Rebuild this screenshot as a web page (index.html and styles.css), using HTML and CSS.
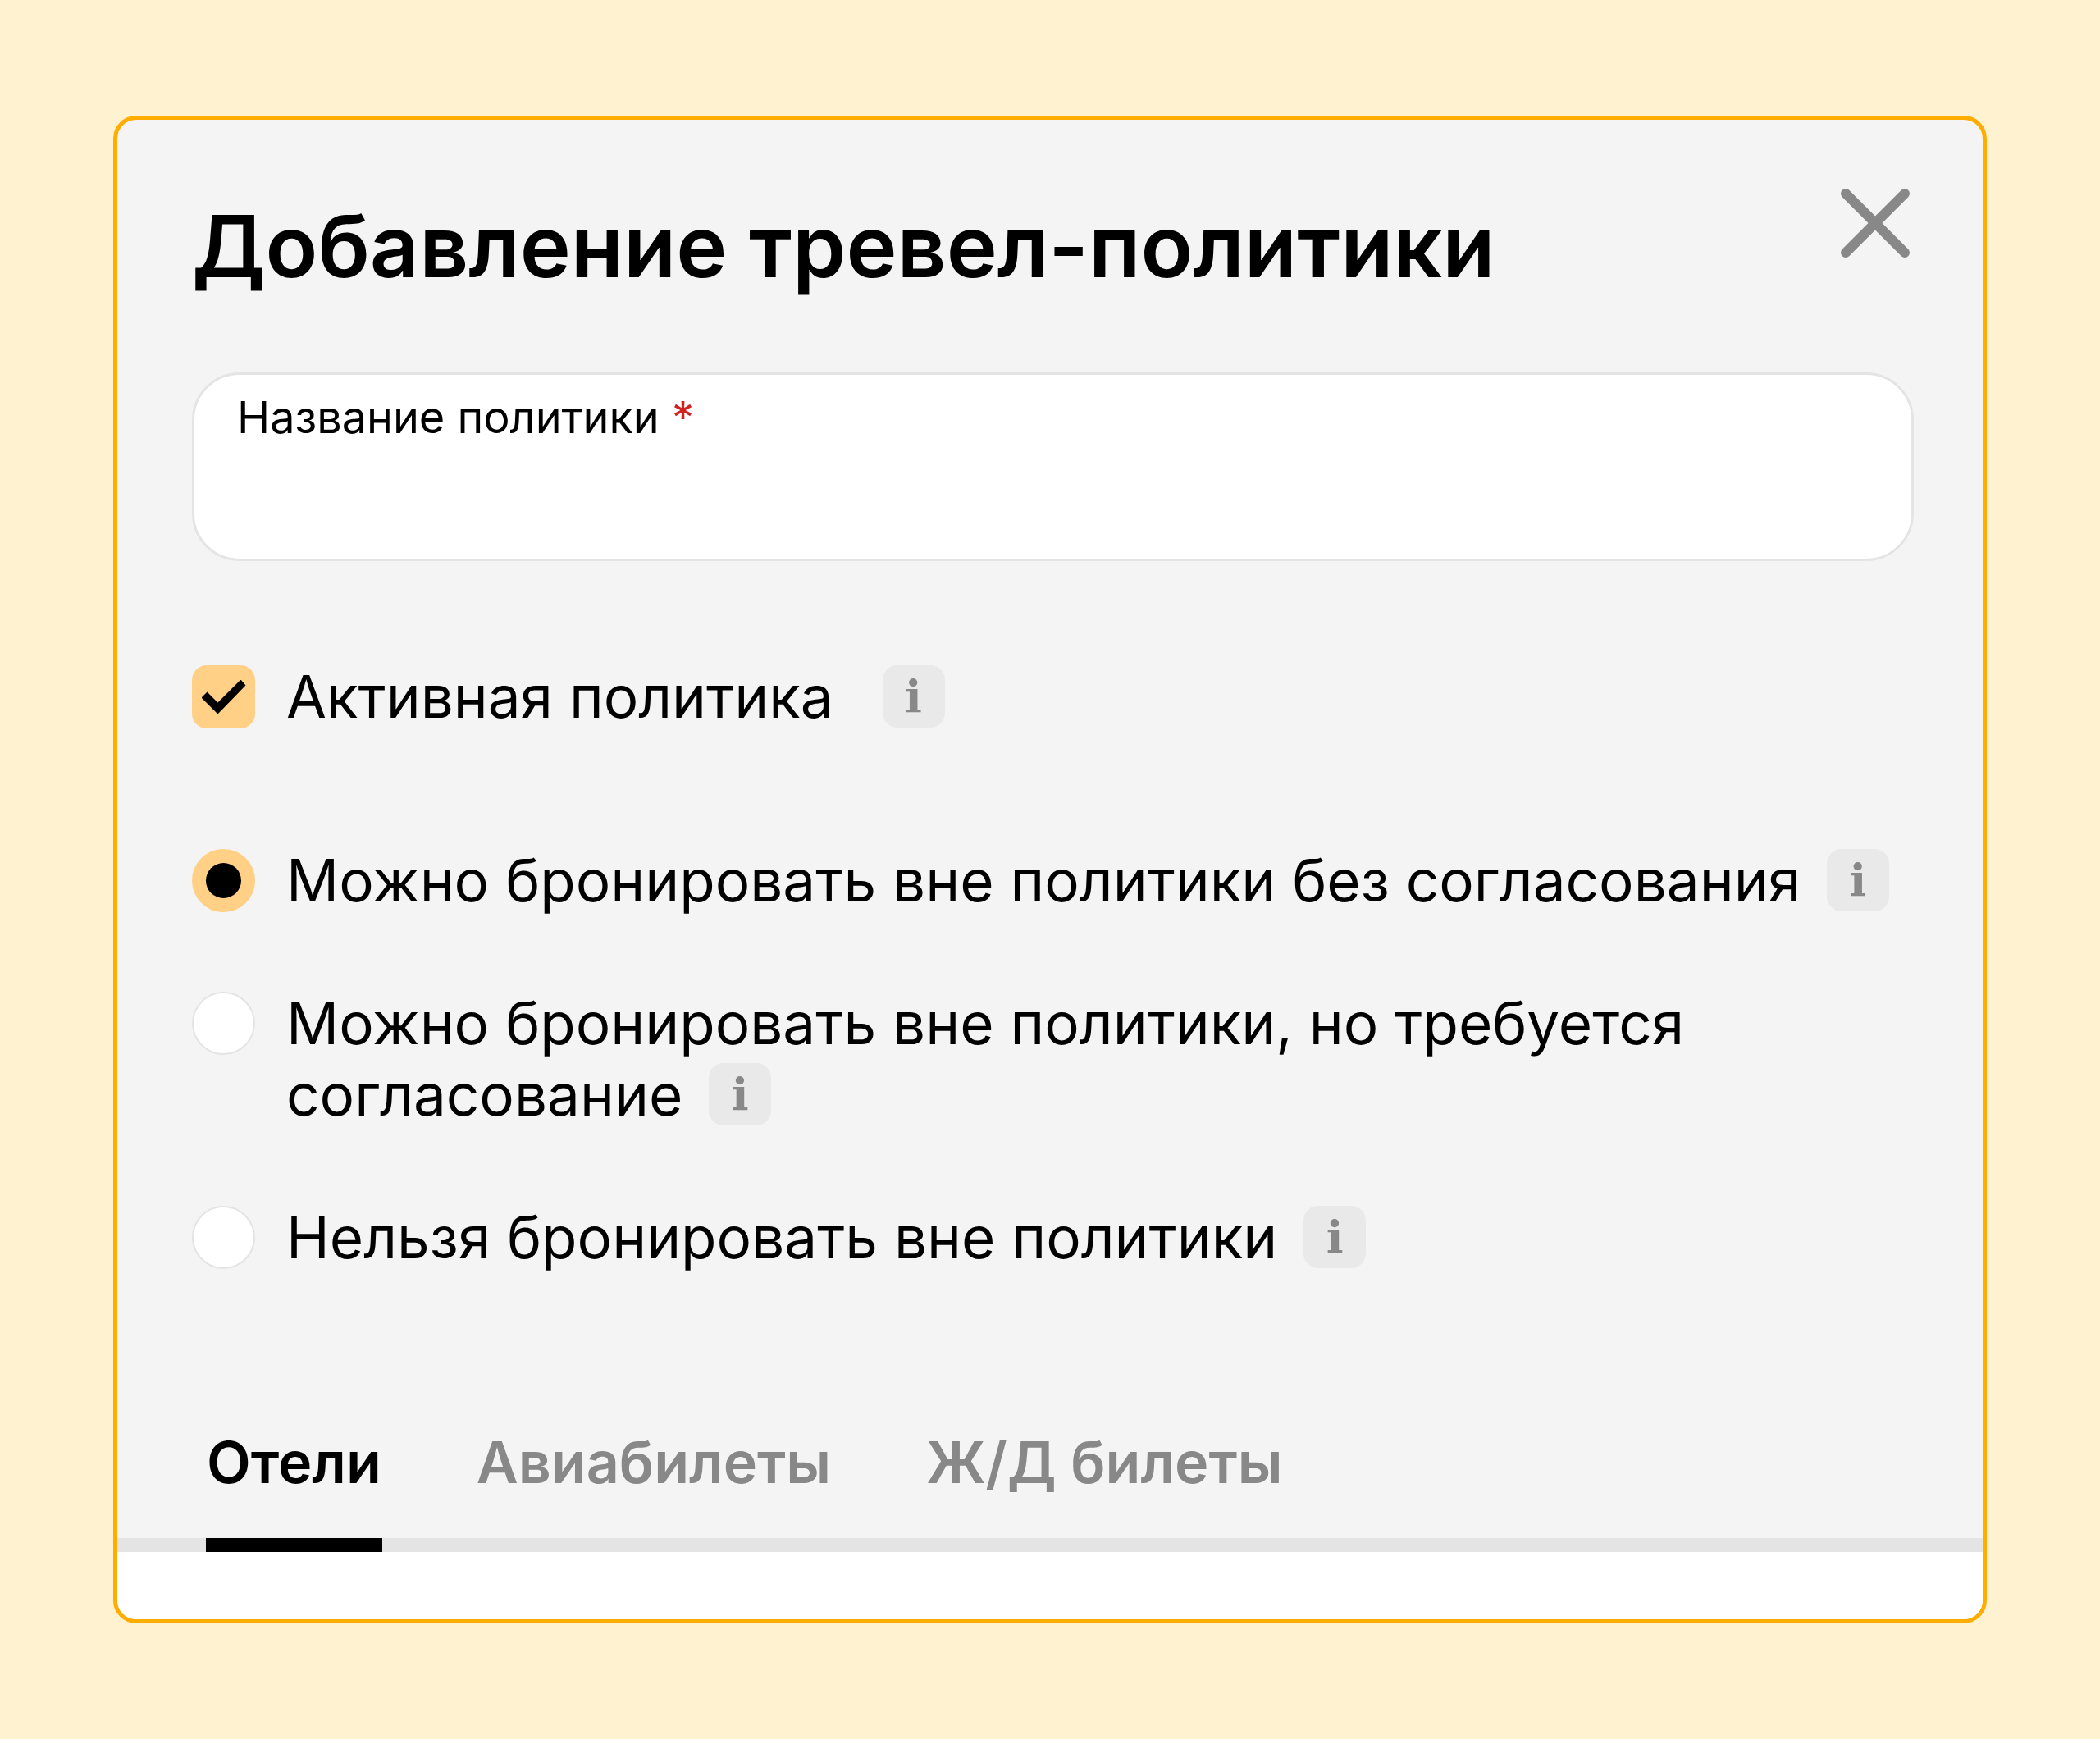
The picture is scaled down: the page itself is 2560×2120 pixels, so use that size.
FILE: index.html
```html
<!DOCTYPE html>
<html lang="ru">
<head>
  <meta charset="UTF-8">
  <meta name="viewport" content="width=device-width, initial-scale=1.0">
  <title>Добавление тревел-политики</title>
  <link rel="stylesheet" href="styles.css">
</head>
<body>
  <main class="modal">
    <form class="modal-body">
      <header class="modal-header">
        <h1>Добавление тревел-политики</h1>
        <button type="button" class="btn-close" aria-label="Закрыть">
          <svg viewBox="0 0 84 84" fill="none" stroke="currentColor" stroke-width="12" stroke-linecap="round">
            <path d="M6 6L78 78M78 6L6 78"/>
          </svg>
        </button>
      </header>

      <div class="field">
        <label for="policy-name">Название политики <span class="required">*</span></label>
        <input type="text" id="policy-name" required>
      </div>

      <div class="option option-active">
        <input type="checkbox" id="policy-active" class="check" checked>
        <div class="option-text">
          <label for="policy-active">Активная политика</label>
          <button type="button" class="info" aria-label="Подсказка">i</button>
        </div>
      </div>

      <div class="option-list">
        <div class="option">
          <input type="radio" name="approval" id="approval-free" class="radio" checked>
          <div class="option-text">
            <label for="approval-free">Можно бронировать вне политики без согласования</label>
            <button type="button" class="info" aria-label="Подсказка">i</button>
          </div>
        </div>
        <div class="option">
          <input type="radio" name="approval" id="approval-required" class="radio">
          <div class="option-text">
            <label for="approval-required">Можно бронировать вне политики, но требуется согласование</label>
            <button type="button" class="info" aria-label="Подсказка">i</button>
          </div>
        </div>
        <div class="option">
          <input type="radio" name="approval" id="approval-denied" class="radio">
          <div class="option-text">
            <label for="approval-denied">Нельзя бронировать вне политики</label>
            <button type="button" class="info" aria-label="Подсказка">i</button>
          </div>
        </div>
      </div>
    </form>

    <nav class="tabs">
      <button type="button" class="tab active">Отели</button>
      <button type="button" class="tab">Авиабилеты</button>
      <button type="button" class="tab">Ж/Д билеты</button>
    </nav>
    <div class="tab-panel"></div>
  </main>
</body>
</html>
```
FILE: styles.css
```css
:root {
  --color-page: #fff2d1;
  --color-border: #ffad00;
  --color-bg: #f4f4f4;
  --color-line: #e4e4e4;
  --color-accent: #ffd086;
  --color-info: #e9e9e9;
  --color-muted: #888888;
  --color-required: #d02020;
  --font-family: Inter, Roboto, sans-serif;
}
* { box-sizing: border-box; margin: 0; padding: 0; }
body {
  padding: 141px 138px;
  background: var(--color-page);
  font-family: var(--font-family);
  font-size: 71px;
  line-height: 87px;
  color: #000;
}
button, input { font: inherit; color: inherit; border: none; background: none; }
button { cursor: pointer; }

/* Modal */
.modal {
  border: 5px solid var(--color-border);
  border-radius: 28px;
  background: var(--color-bg);
  overflow: hidden;
}
.modal-body { padding: 84px 84px 0 91px; }
.modal-header {
  display: flex;
  align-items: flex-start;
  justify-content: space-between;
  margin-bottom: 88px;
}
.modal-header h1 {
  padding-top: 4px;
  font-size: 105px;
  font-weight: 600;
  line-height: 132px;
}
.btn-close { margin-right: 5px; color: var(--color-muted); }
.btn-close svg { display: block; width: 84px; height: 84px; }

/* Name field */
.field {
  display: flex;
  flex-direction: column;
  margin-bottom: 122px;
  padding: 16px 52px;
  border: 3px solid var(--color-line);
  border-radius: 58px;
  background: #fff;
}
.field label { font-size: 54px; line-height: 72px; }
.field input { height: 120px; outline: none; }
.required { color: var(--color-required); }

/* Options */
.option { display: flex; align-items: flex-start; gap: 38px; }
.option-active { margin-bottom: 137px; }
.option-active .info { margin-left: 40px; }
.option-list { display: flex; flex-direction: column; gap: 87px; }
.option-text { flex: 1; }
.check, .radio {
  appearance: none;
  display: grid;
  place-items: center;
  flex: none;
  width: 77px;
  height: 77px;
  margin-top: 5px;
  border: 2px solid var(--color-line);
  background: #fff;
}
.check { border-radius: 18px; }
.radio { border-radius: 50%; }
.check:checked, .radio:checked { border-color: var(--color-accent); background: var(--color-accent); }
.check:checked::before {
  content: "";
  width: 54px;
  height: 42px;
  background: #000;
  clip-path: polygon(0 22px, 7px 15px, 20px 28px, 48px 0, 54px 7px, 20px 42px);
}
.radio:checked::before {
  content: "";
  width: 43px;
  height: 43px;
  border-radius: 50%;
  background: #000;
}
.info {
  width: 76px;
  height: 76px;
  margin-top: 5px;
  margin-left: 12px;
  border-radius: 18px;
  background: var(--color-info);
  font-family: "DejaVu Serif", serif;
  font-size: 55px;
  font-weight: bold;
  line-height: 76px;
  color: var(--color-muted);
  vertical-align: top;
}

/* Tabs */
.tabs {
  display: flex;
  gap: 114px;
  margin-top: 187px;
  padding: 0 108px;
  border-bottom: 17px solid var(--color-line);
}
.tab {
  margin-bottom: -17px;
  padding: 0 1px 49px;
  border-bottom: 17px solid transparent;
  font-size: 70px;
  font-weight: 600;
  color: var(--color-muted);
}
.tab.active { border-color: #000; color: #000; }
.tab-panel { height: 82px; background: #fff; }
```
